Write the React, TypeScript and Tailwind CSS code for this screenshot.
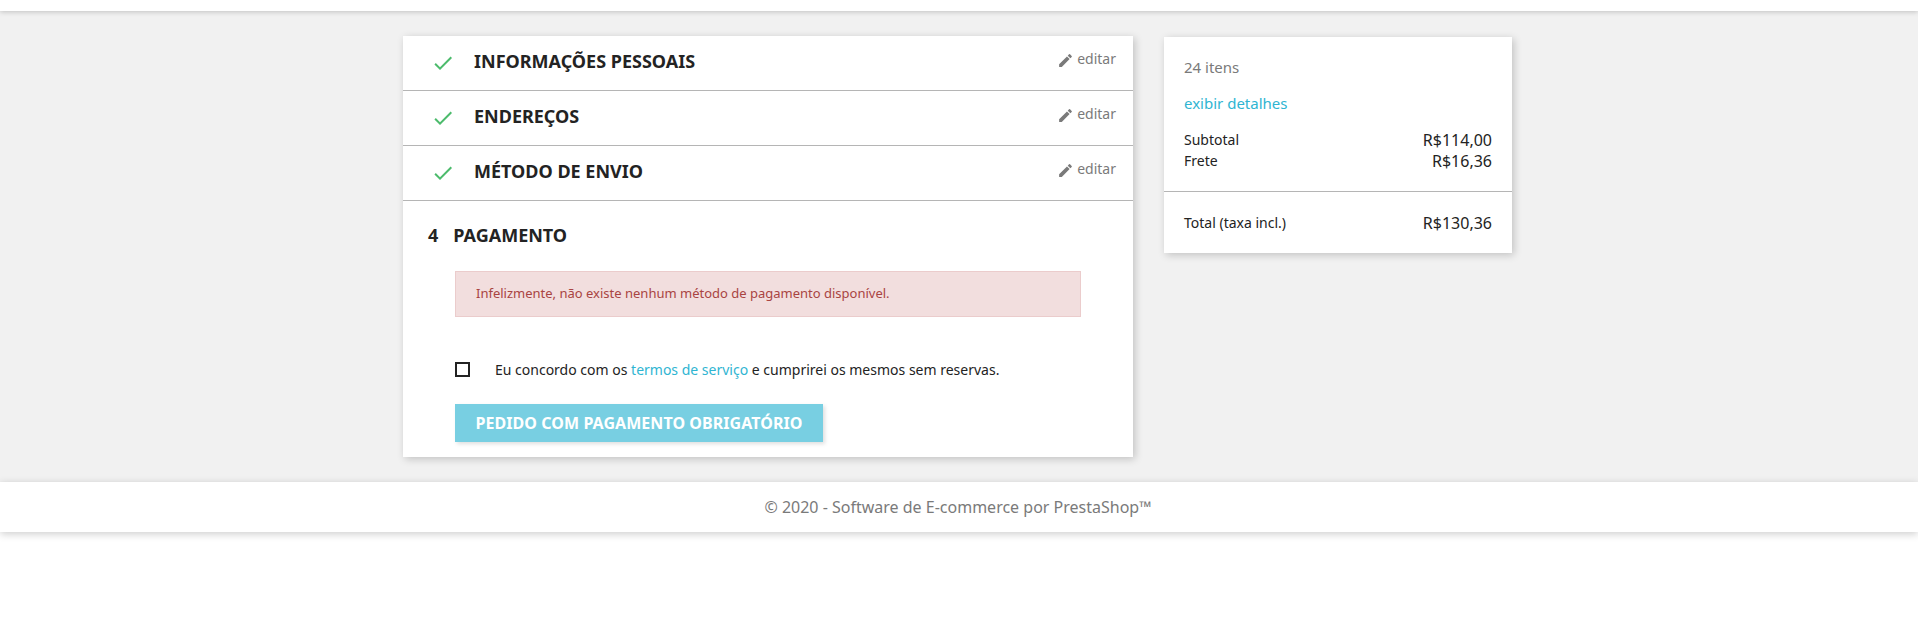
import React from "react";

const Check = () => (
  <svg viewBox="0 0 24 24" className="w-[24px] h-[24px] shrink-0" fill="#4cbb6c">
    <path d="M9 16.17 4.83 12l-1.42 1.41L9 19 21 7l-1.41-1.41z" />
  </svg>
);

const Pencil = () => (
  <svg viewBox="0 0 24 24" className="w-[17px] h-[17px] shrink-0 mt-[2px]" fill="#7a7a7a">
    <path d="M3 17.25V21h3.75L17.81 9.94l-3.75-3.75L3 17.25zM20.71 7.04a1 1 0 0 0 0-1.41l-2.34-2.34a1 1 0 0 0-1.41 0l-1.83 1.83 3.75 3.75 1.83-1.83z" />
  </svg>
);

function Step({ title }: { title: string }) {
  return (
    <div className="h-[55px] border-b border-[#b5b5b5] flex items-start">
      <div className="ml-[28px] mt-[15px]"><Check /></div>
      <h2 className="ml-[19px] mt-[12px] text-[18px] leading-[26px] font-bold text-[#232323]">{title}</h2>
      <div className="ml-auto mr-[17px] mt-[13px] flex items-center gap-[3px] text-[14px] leading-[20px] text-[#7a7a7a]">
        <Pencil />
        <span>editar</span>
      </div>
    </div>
  );
}

function Line({ label, value }: { label: string; value: string }) {
  return (
    <div className="flex justify-between items-center h-[21px] text-[#232323]">
      <span className="text-[14px]">{label}</span>
      <span className="text-[16px]">{value}</span>
    </div>
  );
}

export default function App() {
  return (
    <div className="font-['Noto_Sans',sans-serif] bg-white min-h-[621px]">
      <header className="relative z-10 h-[11px] bg-white shadow-[0_1px_5px_rgba(0,0,0,0.2)]" />
      <main className="bg-[#f1f1f1] h-[471px] pt-[25px] flex justify-center">
        <div className="w-[1140px] flex pl-[14px]">
          <section className="w-[730px] h-[421px] bg-white shadow-[2px_2px_8px_rgba(0,0,0,0.2)]">
            <Step title="INFORMAÇÕES PESSOAIS" />
            <Step title="ENDEREÇOS" />
            <Step title="MÉTODO DE ENVIO" />
            <div>
              <h2 className="ml-[25px] mt-[21px] flex text-[18px] leading-[26px] font-bold text-[#232323]">
                <span>4</span>
                <span className="ml-[15px]">PAGAMENTO</span>
              </h2>
              <div className="ml-[52px] mt-[23px] w-[626px] h-[46px] flex items-center pl-[20px] bg-[#f2dede] border border-[#ebcccc] text-[13px] text-[#a94442]">
                Infelizmente, não existe nenhum método de pagamento disponível.
              </div>
              <div className="ml-[52px] mt-[45px] flex items-center h-[15px]">
                <span className="w-[15px] h-[15px] border-2 border-[#232323] shrink-0" />
                <span className="ml-[25px] text-[14px] text-[#232323] whitespace-nowrap">
                  Eu concordo com os <span className="text-[#2fb5d2]">termos de serviço</span> e cumprirei os mesmos sem reservas.
                </span>
              </div>
              <button className="ml-[52px] mt-[27px] w-[368px] h-[38px] bg-[#78cfe2] text-white text-[16px] font-bold tracking-[0.06px] shadow-[2px_2px_4px_rgba(0,0,0,0.13)]">
                PEDIDO COM PAGAMENTO OBRIGATÓRIO
              </button>
            </div>
          </section>
          <aside className="ml-[31px] mt-[1px] w-[348px] h-[216px] bg-white shadow-[2px_2px_8px_rgba(0,0,0,0.2)] flex flex-col">
            <div className="px-[20px] h-[155px] border-b border-[#b5b5b5]">
              <p className="mt-[20px] text-[15px] leading-[20px] text-[#7a7a7a]">24 itens</p>
              <p className="mt-[16px] text-[15px] leading-[20px] text-[#2fb5d2]">exibir detalhes</p>
              <div className="mt-[16px]">
                <Line label="Subtotal" value="R$114,00" />
                <Line label="Frete" value="R$16,36" />
              </div>
            </div>
            <div className="px-[20px] mt-[20px]">
              <Line label="Total (taxa incl.)" value="R$130,36" />
            </div>
          </aside>
        </div>
      </main>
      <footer className="h-[50px] bg-white shadow-[0_2px_8px_rgba(0,0,0,0.2)] flex items-center justify-center text-[16px] text-[#7a7a7a] pr-[2px]">
        © 2020 - Software de E-commerce por PrestaShop™
      </footer>
    </div>
  );
}
